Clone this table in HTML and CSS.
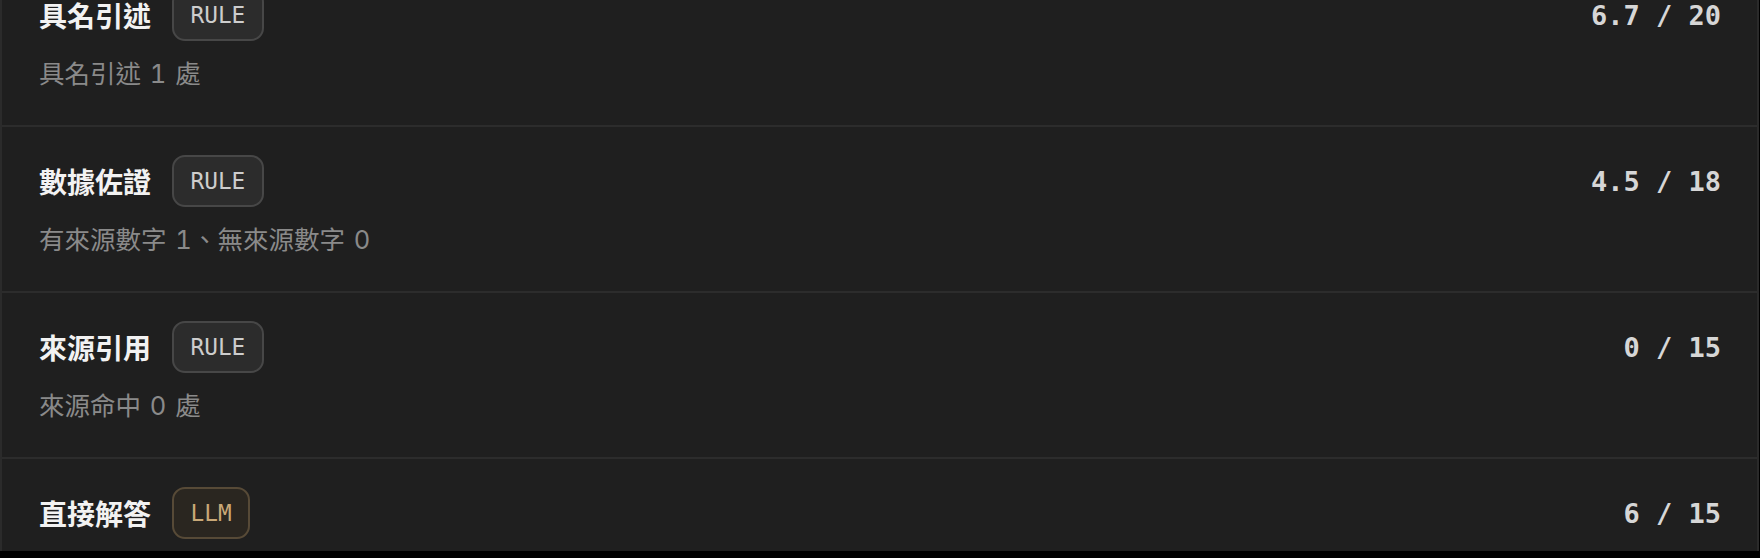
FILE: index.html
```html
<!DOCTYPE html>
<html lang="zh-Hant">
<head>
    <meta charset="UTF-8">
    <meta name="viewport" content="width=device-width, initial-scale=1.0">
    <title>評分細項</title>
    <link rel="stylesheet" href="styles.css">
</head>
<body>
    <div class="panel">
        <div class="criteria">
            <div class="row">
                <div class="row-head">
                    <span class="row-title">具名引述</span>
                    <span class="tag">RULE</span>
                    <span class="score">6.7 / 20</span>
                </div>
                <div class="row-note">具名引述 1 處</div>
            </div>

            <div class="row">
                <div class="row-head">
                    <span class="row-title">數據佐證</span>
                    <span class="tag">RULE</span>
                    <span class="score">4.5 / 18</span>
                </div>
                <div class="row-note">有來源數字 1、無來源數字 0</div>
            </div>

            <div class="row">
                <div class="row-head">
                    <span class="row-title">來源引用</span>
                    <span class="tag">RULE</span>
                    <span class="score">0 / 15</span>
                </div>
                <div class="row-note">來源命中 0 處</div>
            </div>

            <div class="row">
                <div class="row-head">
                    <span class="row-title">直接解答</span>
                    <span class="tag tag-llm">LLM</span>
                    <span class="score">6 / 15</span>
                </div>
            </div>
        </div>
    </div>
</body>
</html>
```

FILE: styles.css
```css
body {
    margin: 0;
    background: #000;
    font-family: Inter, "Noto Sans CJK TC", sans-serif;
}

.panel {
    width: 1759px;
    height: 551px;
    box-sizing: border-box;
    overflow: hidden;
    background: #1f1f1f;
    border-left: 2px solid #2b2b2b;
    border-right: 2px solid #2b2b2b;
}

/* list is scrolled, first row partly out of view */
.criteria {
    margin-top: -41px;
}

.row {
    border-top: 2px solid #2c2c2c;
    padding: 28px 36px 34px 37px;
}

.row-head {
    display: flex;
    align-items: center;
    gap: 21px;
    height: 52px;
}

.row-title {
    font-size: 28px;
    font-weight: bold;
    color: #f2f2f2;
}

.tag {
    height: 52px;
    box-sizing: border-box;
    display: flex;
    align-items: center;
    padding: 0 16.5px;
    border: 2px solid #474747;
    border-radius: 13px;
    background: #2c2c2c;
    color: #cdcdcd;
    font-family: "DejaVu Sans Mono", monospace;
    font-size: 22.75px;
}

.tag-llm {
    background: #2a2620;
    border-color: #574a37;
    color: #c9a877;
}

.score {
    margin-left: auto;
    font-family: "DejaVu Sans Mono", monospace;
    font-size: 27px;
    font-weight: bold;
    color: #d6d6d6;
}

.row-note {
    margin-top: 16px;
    line-height: 34px;
    font-size: 25.5px;
    font-variant-numeric: tabular-nums;
    word-spacing: 2px;
    color: #8a8a8a;
}
```
